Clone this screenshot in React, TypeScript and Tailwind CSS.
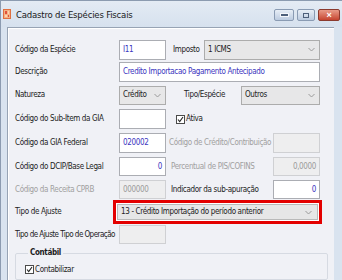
import React from "react";

const narrow = "font-['Liberation_Sans_Narrow','DejaVu_Sans_Condensed','Liberation_Sans',sans-serif]";

function Chevron() {
  return (
    <svg width="7" height="5" viewBox="0 0 7 5" className="shrink-0">
      <polyline points="0.5,1 3.5,4 6.5,1" fill="none" stroke="#9a9a9a" strokeWidth="1" />
    </svg>
  );
}

function Check() {
  return (
    <svg width="9" height="9" viewBox="0 0 9 9" className="shrink-0">
      <rect x="0.5" y="0.5" width="8" height="8" fill="#ffffff" stroke="#4a4a4a" />
      <polyline points="2,4.5 3.7,6.5 7,2" fill="none" stroke="#222" strokeWidth="1.1" />
    </svg>
  );
}

function Field({
  w,
  h = 20,
  value = "",
  off = false,
  right = false,
}: {
  w: number;
  h?: number;
  value?: string;
  off?: boolean;
  right?: boolean;
}) {
  return (
    <div
      className={`flex items-center border px-[3px] shrink-0 whitespace-nowrap ${
        off ? "bg-[#eeeeef] border-[#cfd0d3] text-[#9b9b9b]" : "bg-white border-[#abadb3] text-[#3b35c0]"
      } ${right ? "justify-end" : ""}`}
      style={{ width: w, height: h }}
    >
      {value}
    </div>
  );
}

function Combo({ w, h = 20, value }: { w: number; h?: number; value: string }) {
  return (
    <div
      className="flex items-center justify-between border border-[#acacac] bg-[#e7e7e8] pl-[3px] pr-[4px] text-[#222] shrink-0 whitespace-nowrap"
      style={{ width: w, height: h }}
    >
      <span>{value}</span>
      <Chevron />
    </div>
  );
}

function Row({ h, label, grey = false, lw = 104, tight = false, children }: { h: number; label: string; grey?: boolean; lw?: number; tight?: boolean; children?: React.ReactNode }) {
  return (
    <div className="flex items-center whitespace-nowrap" style={{ height: h }}>
      <div className={`shrink-0 ${grey ? "text-[#a0a0a0]" : "text-[#1c1c1c]"} ${tight ? "tracking-[-0.55px]" : ""}`} style={{ width: lw }}>
        {label}
      </div>
      {children}
    </div>
  );
}

export default function App() {
  return (
    <div className={`w-[342px] h-[280px] overflow-hidden flex flex-col bg-[#d9e3ef] border-l border-t border-[#8c9bb0] text-[8px] leading-none tracking-[-0.35px] ${narrow}`}>
      {/* title bar */}
      <div className="h-[26px] shrink-0 flex items-start pt-[7px] pl-[2px] bg-gradient-to-b from-[#e4ebf4] to-[#d6e1ee]">
        <div className="w-[8px] h-[10px] mt-[1px] bg-[#f4b183] border border-[#e07040] grid grid-cols-2 gap-[1px] p-[1px]">
          <div className="bg-[#e0503a]" />
          <div className="bg-[#ffd0b0]" />
          <div className="bg-[#ffd0b0]" />
          <div className="bg-[#e0503a]" />
        </div>
        <div className="ml-[5px] mt-[2px] text-[9.5px] text-[#1a1a1a] tracking-[-0.2px]">Cadastro de Espécies Fiscais</div>
        <div className="ml-auto flex gap-[3px] mr-[2px] mt-[1px]">
          <div className="w-[20px] h-[12px] rounded-[2px] border border-[#8a9bb3] bg-gradient-to-b from-[#e8eef6] to-[#bccbe0] flex items-end justify-center pb-[3px]">
            <div className="w-[7px] h-[2px] bg-[#4d5f7a] border border-[#f4f6fa] box-content" />
          </div>
          <div className="w-[18px] h-[12px] rounded-[2px] border border-[#8a9bb3] bg-gradient-to-b from-[#e8eef6] to-[#bccbe0] flex items-center justify-center">
            <div className="w-[6px] h-[5px] border-[1.5px] border-[#4d5f7a]" />
          </div>
          <div className="w-[22px] h-[12px] rounded-[2px] border border-[#8b3a2e] bg-gradient-to-b from-[#e89a88] to-[#c5432f] flex items-center justify-center text-white text-[9px] font-bold font-['Liberation_Sans',sans-serif]">
            ×
          </div>
        </div>
      </div>

      {/* body */}
      <div className="flex-1 flex flex-col ml-[6px] mr-[8px] bg-[#f0f1f6] border-l border-t border-[#97a3b4] shadow-[inset_1px_1px_0_#ffffff] pl-[7px] pt-[10px]">
        <Row h={23} label="Código da Espécie">
          <Field w={47} value="I11" />
          <div className="ml-[7px] w-[31px] text-[#1c1c1c]">Imposto</div>
          <Combo w={116} value="1 ICMS" />
        </Row>
        <Row h={22} label="Descrição">
          <Field w={201} value="Credito Importacao Pagamento Antecipado" />
        </Row>
        <Row h={24} label="Natureza">
          <Combo w={47} h={19} value="Crédito" />
          <div className="ml-[18px] w-[57px] text-[#1c1c1c]">Tipo/Espécie</div>
          <Combo w={79} h={19} value="Outros" />
        </Row>
        <Row h={24} label="Código do Sub-Item da GIA">
          <Field w={47} />
          <div className="ml-[10px] flex items-center gap-[1px] text-[#1c1c1c]">
            <Check />
            <span>Ativa</span>
          </div>
        </Row>
        <Row h={24} label="Código da GIA Federal">
          <Field w={47} value="020002" />
          <div className="ml-[3px] w-[104px] text-[#a0a0a0]">Código de Crédito/Contribuição</div>
          <Field w={47} off />
        </Row>
        <Row h={23} label="Código do DCIP/Base Legal">
          <Field w={47} h={19} value="0" right />
          <div className="ml-[5px] w-[102px] text-[#a0a0a0]">Percentual de PIS/COFINS</div>
          <Field w={47} h={19} value="0,0000" off right />
        </Row>
        <Row h={23} label="Código da Receita CPRB" grey>
          <Field w={47} h={19} value="000000" off />
          <div className="ml-[5px] w-[102px] text-[#1c1c1c]">Indicador da sub-apuração</div>
          <Field w={47} h={19} value="0" right />
        </Row>
        <Row h={22} label="Tipo de Ajuste" lw={98}>
          <div className="w-[209px] h-[24px] border-[3px] border-[#e30000] bg-white p-[1px] flex">
            <div className="flex-1 flex items-center justify-between border border-[#b9b9b9] bg-[#e6e6e7] pl-[3px] pr-[5px] text-[#222]">
              <span>13 - Crédito Importação do período anterior</span>
              <Chevron />
            </div>
          </div>
        </Row>
        <Row h={23} label="Tipo de Ajuste Tipo de Operação" tight>
          <Field w={47} h={19} off />
        </Row>

        <fieldset className="mt-[3px] w-[313px] flex-1 border border-[#d6dae2] rounded-[2px] pl-[9px] pt-[8px]">
          <legend className="ml-[3px] px-[2px] font-bold text-[#1c1c1c]">Contábil</legend>
          <div className="flex items-center gap-[1px] text-[#1c1c1c]">
            <Check />
            <span>Contabilizar</span>
          </div>
        </fieldset>
      </div>
    </div>
  );
}
